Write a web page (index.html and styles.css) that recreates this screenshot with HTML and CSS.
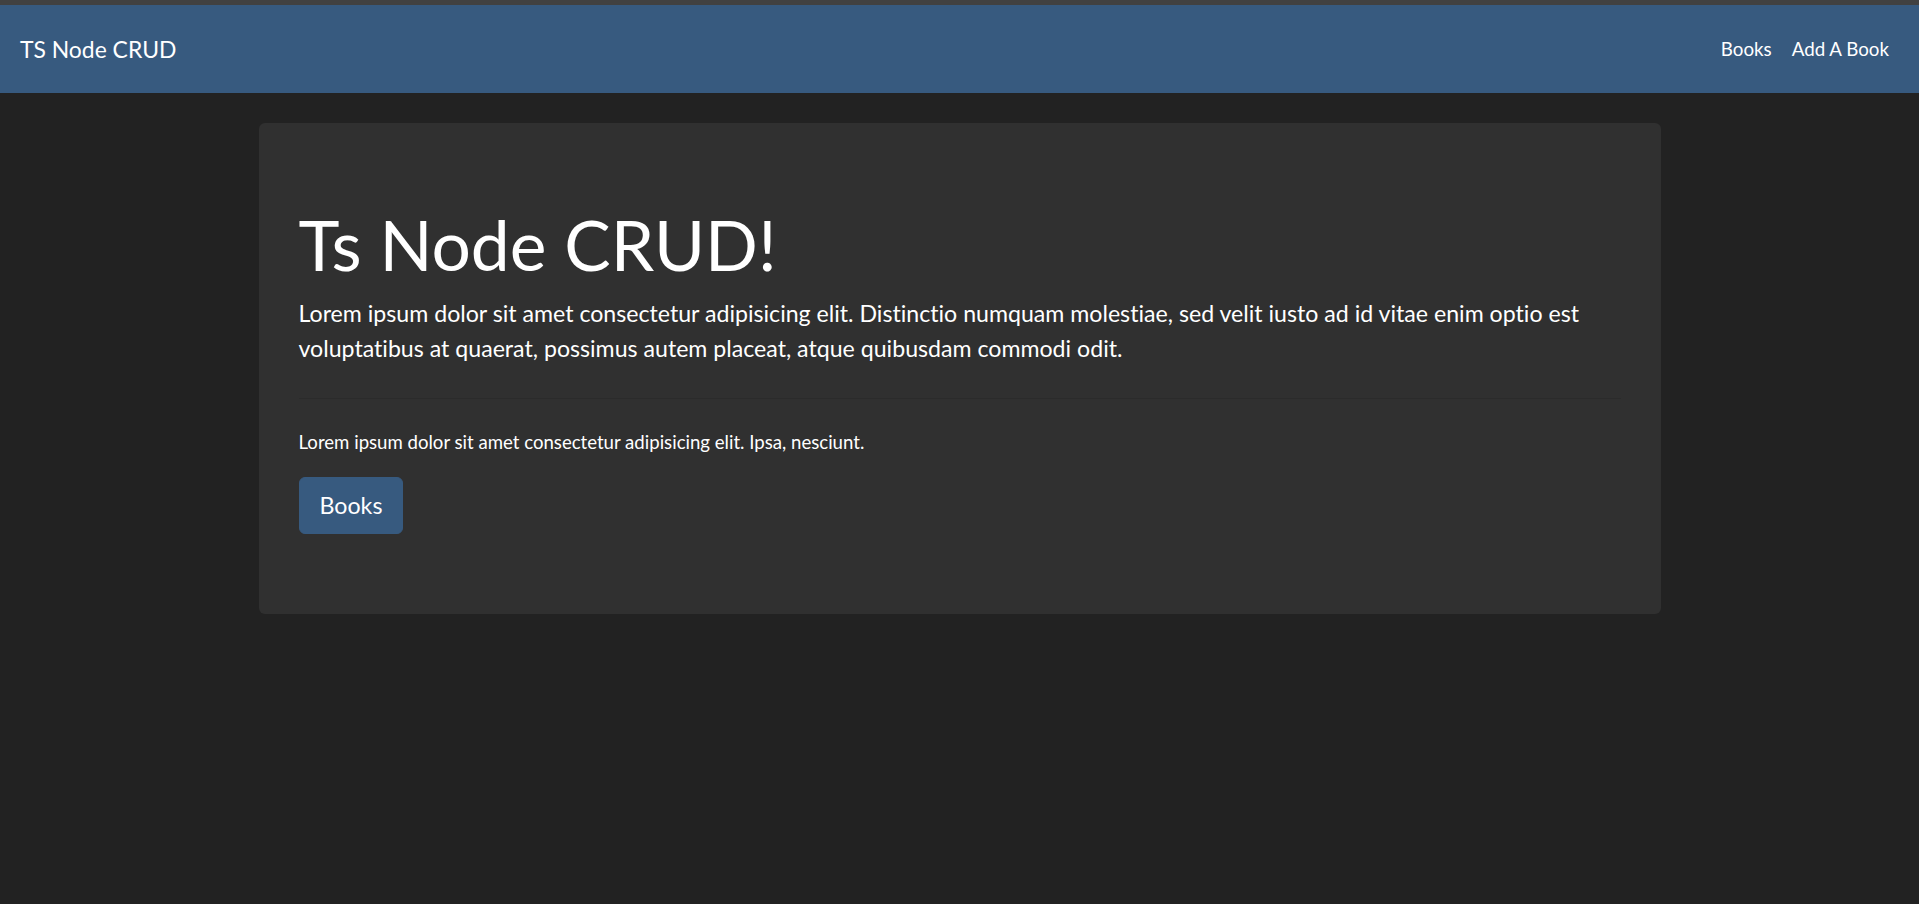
FILE: index.html
```html
<!DOCTYPE html>
<html lang="en">
<head>
<meta charset="utf-8">
<title>TS Node CRUD</title>
<link rel="stylesheet" href="styles.css">
</head>
<body>
<div class="topstrip"></div>
<nav class="navbar">
  <a class="brand" href="#">TS Node CRUD</a>
  <ul class="nav">
    <li><a class="nav-link" href="#">Books</a></li>
    <li><a class="nav-link" href="#">Add A Book</a></li>
  </ul>
</nav>
<main class="container">
  <section class="jumbotron">
    <h1 class="display">Ts Node CRUD!</h1>
    <p class="lead">Lorem ipsum dolor sit amet consectetur adipisicing elit. Distinctio numquam molestiae, sed velit iusto ad id vitae enim optio est voluptatibus at quaerat, possimus autem placeat, atque quibusdam commodi odit.</p>
    <hr class="divider">
    <p class="text">Lorem ipsum dolor sit amet consectetur adipisicing elit. Ipsa, nesciunt.</p>
    <div class="actions">
      <a class="btn" href="#">Books</a>
    </div>
  </section>
</main>
</body>
</html>
```
FILE: styles.css
```css
* { box-sizing: border-box; }

html, body {
  margin: 0;
  padding: 0;
}

body {
  background: #222222;
  color: #ffffff;
  font-family: Lato, "Noto Sans", "Liberation Sans", sans-serif;
  font-size: 18.6px;
  line-height: 1.5;
  min-height: 904px;
  font-variant-ligatures: none;
}

a { color: #ffffff; text-decoration: none; }

.topstrip {
  height: 5px;
  background: #414141;
}

.navbar {
  height: 88px;
  background: #375a7f;
  display: flex;
  align-items: center;
  justify-content: space-between;
  padding: 0 20px;
}

.brand {
  font-size: 22.9px;
  line-height: 1.5;
}

.nav {
  list-style: none;
  margin: 0;
  padding: 0;
  display: flex;
}

.nav-link {
  display: block;
  padding: 10px 10px;
  font-size: 18.75px;
}

.container {
  width: 1402px;
  margin: 30px auto 0;
}

.jumbotron {
  background: #303030;
  border-radius: 6px;
  padding: 80px 40px;
}

.display {
  margin: 0 0 10px;
  font-size: 69.5px;
  font-weight: 400;
  line-height: 1.2;
}

.lead {
  margin: 0 0 20px;
  font-size: 23.15px;
  font-weight: 400;
  line-height: 1.5;
}

.divider {
  margin: 32px 0 30px;
  border: 0;
  border-top: 1px solid rgba(0, 0, 0, 0.1);
}

.text {
  margin: 0 0 20px;
}

.actions {
  display: flex;
}

.btn {
  display: inline-block;
  background: #375a7f;
  border: 1px solid #375a7f;
  border-radius: 6px;
  padding: 10px 20px;
  font-size: 23.2px;
  line-height: 1.5;
  color: #ffffff;
}
```
